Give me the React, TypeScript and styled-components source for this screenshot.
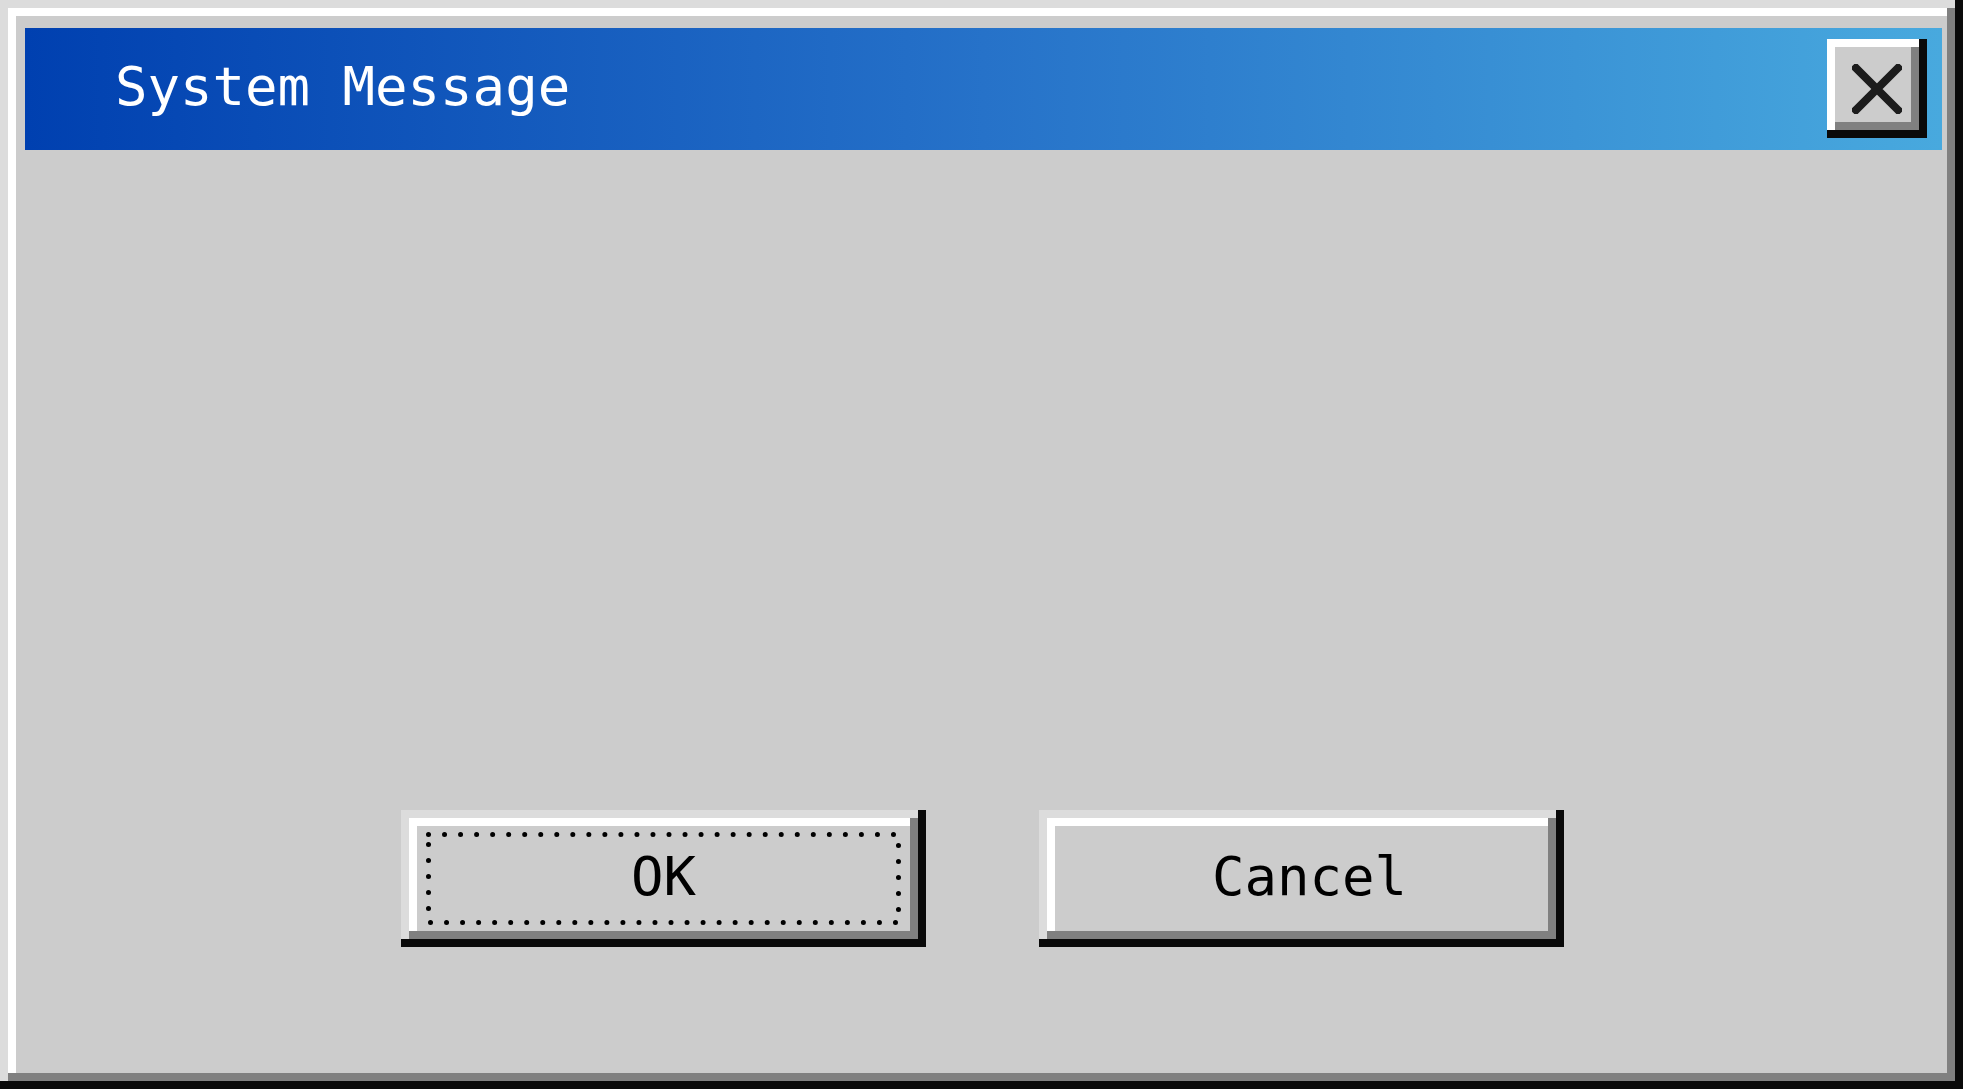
import React from "react";
import styled, { createGlobalStyle } from "styled-components";

const GlobalStyle = createGlobalStyle`
  html, body {
    margin: 0;
    padding: 0;
    background: #ffffff;
  }
  body {
    font-family: "DejaVu Sans Mono", "Liberation Mono", monospace;
  }
`;

const bevelRaised = `
  box-shadow:
    inset -8px -8px #0a0a0a,
    inset 8px 8px #dcdcdc,
    inset -16px -16px #808080,
    inset 16px 16px #ffffff;
`;

const Window = styled.div`
  box-sizing: border-box;
  width: 1963px;
  height: 1089px;
  background: #cccccc;
  ${bevelRaised}
  padding: 28px 21px 16px 25px;
  display: flex;
  flex-direction: column;
`;

const TitleBar = styled.div`
  height: 122px;
  flex: none;
  display: flex;
  align-items: center;
  justify-content: space-between;
  padding: 0 15px 0 90px;
  background: linear-gradient(90deg, #0040b0 0%, #2672c9 50%, #48a9de 100%);
`;

const TitleText = styled.span`
  color: #ffffff;
  font-family: "DejaVu Sans Mono", "Liberation Mono", monospace;
  font-size: 54px;
  line-height: 1;
  margin-top: -4px;
  white-space: pre;
`;

const CloseButton = styled.button`
  box-sizing: border-box;
  width: 100px;
  height: 99px;
  margin-top: -1px;
  padding: 0;
  border: none;
  background: #cccccc;
  box-shadow:
    inset -8px -8px #0a0a0a,
    inset 8px 8px #ffffff,
    inset -16px -16px #808080;
  display: flex;
  align-items: center;
  justify-content: center;
  cursor: pointer;
`;

const Body = styled.div`
  flex: 1;
  display: flex;
  flex-direction: column;
  justify-content: flex-end;
  padding-bottom: 126px;
`;

const ButtonRow = styled.div`
  display: flex;
  justify-content: center;
  gap: 113px;
  margin-left: -2px;
`;

const DialogButton = styled.button`
  box-sizing: border-box;
  width: 525px;
  height: 137px;
  padding: 16px;
  border: none;
  background: #cccccc;
  ${bevelRaised}
  display: flex;
  align-items: stretch;
  justify-content: stretch;
  font-family: "DejaVu Sans Mono", "Liberation Mono", monospace;
  font-size: 54px;
  color: #000000;
  cursor: pointer;
`;

const Face = styled.span<{ $focused?: boolean }>`
  flex: 1;
  position: relative;
  display: flex;
  align-items: center;
  justify-content: center;
  margin: ${(p) => (p.$focused ? "6px 9px 6px 9px" : "0")};
  line-height: 1;
  padding-bottom: 3px;
  padding-left: ${(p) => (p.$focused ? "0" : "16px")};
`;

const DotRing = styled.svg`
  position: absolute;
  inset: 0;
  width: 100%;
  height: 100%;
  pointer-events: none;
`;

function FocusDots() {
  return (
    <DotRing viewBox="0 0 474 93" preserveAspectRatio="none">
      <rect
        x="2.5"
        y="2.5"
        width="469"
        height="88"
        fill="none"
        stroke="#000"
        strokeWidth="5"
        strokeLinecap="round"
        strokeDasharray="0 16"
      />
    </DotRing>
  );
}

export default function App() {
  return (
    <>
      <GlobalStyle />
      <Window>
        <TitleBar>
          <TitleText>System Message</TitleText>
          <CloseButton aria-label="Close">
            <svg width="50" height="50" viewBox="0 0 50 50">
              <path
                d="M4 4 L46 46 M46 4 L4 46"
                stroke="#1c1c1c"
                strokeWidth="8"
                strokeLinecap="square"
                fill="none"
              />
            </svg>
          </CloseButton>
        </TitleBar>
        <Body>
          <ButtonRow>
            <DialogButton>
              <Face $focused>
                OK
                <FocusDots />
              </Face>
            </DialogButton>
            <DialogButton>
              <Face>Cancel</Face>
            </DialogButton>
          </ButtonRow>
        </Body>
      </Window>
    </>
  );
}
